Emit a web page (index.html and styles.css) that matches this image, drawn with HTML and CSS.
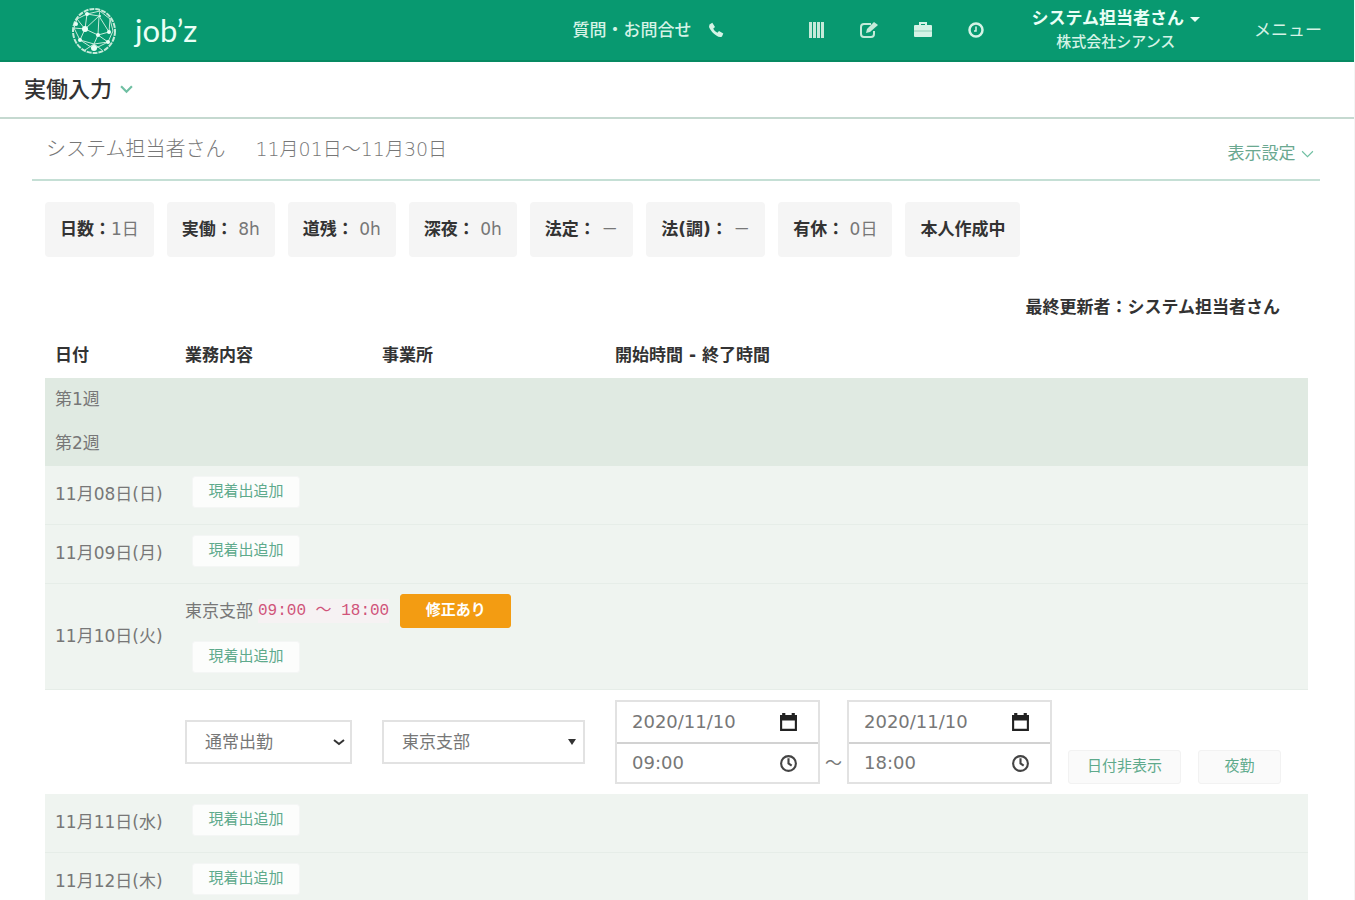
FILE: index.html
```html
<!DOCTYPE html>
<html lang="ja">
<head>
  <meta charset="UTF-8">
  <meta name="viewport" content="width=device-width, initial-scale=1.0">
  <title>実働入力 | job'z</title>
  <link rel="stylesheet" href="styles.css">
</head>
<body>
<header class="navbar">
  <a href="#" class="brand">
    <svg class="brand-mark" viewBox="0 0 46 48" fill="none" stroke="#c5ead9" stroke-width="1">
      <ellipse cx="23" cy="25" rx="21" ry="22" stroke-width="2" stroke-dasharray="5 1"/>
      <path d="M16 8L29 5L39 13L42 25L37 36L23 43L9 34L3 22L6 13L16 8L14 23L28 10L27 29L14 23L3 22M14 23L9 34L23 38L27 29L38 26L28 10L29 5M27 29L37 36L23 38L23 43M38 26L39 13M6 13L14 23M16 8L28 10M23 38L14 44M23 38L31 44"/>
      <g fill="#e9fff6" stroke="none">
        <circle cx="14" cy="23" r="3"/><circle cx="16" cy="8" r="2"/><circle cx="27" cy="29" r="2"/><circle cx="38" cy="26" r="2"/>
        <circle cx="37" cy="36" r="2"/><circle cx="9" cy="34" r="2"/><circle cx="23" cy="42" r="3"/><circle cx="5" cy="18" r="2"/><circle cx="29" cy="10" r="1"/>
      </g>
    </svg>
    <span class="brand-name">job’z</span>
  </a>
  <a href="#" class="contact">質問・お問合せ
    <svg class="icon" viewBox="0 0 16 16"><path d="M1.5 2.5L4.3.8L7 5L5.2 6.7Q6.5 9.3 9.4 10.8L11 9L15.3 11.6L14 14.4Q12 16 8.300 13.500Q3 10 1 5Z" fill="#d5f3e6"/></svg>
  </a>
  <nav class="tools">
    <a href="#" aria-label="一覧"><svg class="icon" viewBox="0 0 16 16" fill="#c5ead9"><path d="M1 0h3v16H1zM5 0h3v16H5zM9 0h3v16H9zM13 0h3v16h-3z"/></svg></a>
    <a href="#" aria-label="編集"><svg class="icon icon-wide" viewBox="0 0 18 16" fill="none" stroke="#c5ead9" stroke-width="2"><path d="M11 2H4Q1 2 1 5v7q0 3 3 3h7q3 0 3-3V9"/><path d="M6 11l1-4L14 0l4 3l-8 7z" fill="#c5ead9" stroke="none"/></svg></a>
    <a href="#" aria-label="業務"><svg class="icon icon-wide" viewBox="0 0 18 16"><path d="M6 3V1h6v2" fill="none" stroke="#d5f3e6" stroke-width="2"/><path d="M1 3h16q1 0 1 1v5H0V4q0-1 1-1zM0 9h18v5q0 1-1 1H1q-1 0-1-1z" fill="#d5f3e6"/><path d="M0 9h18" stroke="#8fd0b8"/></svg></a>
    <a href="#" aria-label="勤怠"><svg class="icon" viewBox="0 0 16 16" fill="none" stroke="#d5f3e6"><circle cx="8" cy="8" r="6.500" stroke-width="2.500"/><path d="M8 4.500V9H6" stroke-width="1.500"/></svg></a>
  </nav>
  <a href="#" class="user">
    <span class="user-name">システム担当者さん <i class="caret"></i></span>
    <span class="user-company">株式会社シアンス</span>
  </a>
  <a href="#" class="menu">メニュー</a>
</header>

<div class="page-title">
  <h1>実働入力</h1>
  <svg class="chevron" viewBox="0 0 12 8"><path d="M1 1l5 5l5-5"/></svg>
</div>

<main class="content">
  <div class="sub-header">
    <h2>システム担当者さん<span class="period">11月01日～11月30日</span></h2>
    <a href="#" class="display-setting">表示設定 <svg class="chevron chevron-thin" viewBox="0 0 12 8"><path d="M1 1l5 5l5-5"/></svg></a>
  </div>

  <div class="body">
    <ul class="summary">
      <li><b>日数：</b>1日</li>
      <li><b>実働：</b> 8h</li>
      <li><b>道残：</b> 0h</li>
      <li><b>深夜：</b> 0h</li>
      <li><b>法定：</b> －</li>
      <li><b>法(調)：</b> －</li>
      <li><b>有休：</b> 0日</li>
      <li><b>本人作成中</b></li>
    </ul>

    <p class="updated">最終更新者：システム担当者さん</p>

    <table class="work">
      <colgroup><col class="col-date"><col class="col-work"><col class="col-office"><col></colgroup>
      <thead>
        <tr><th>日付</th><th>業務内容</th><th>事業所</th><th>開始時間 - 終了時間</th></tr>
      </thead>
      <tbody>
        <tr class="week"><td colspan="4">第1週</td></tr>
        <tr class="week"><td colspan="4">第2週</td></tr>
        <tr class="day"><td>11月08日(日)</td><td colspan="3"><button class="btn btn-add">現着出追加</button></td></tr>
        <tr class="day"><td>11月09日(月)</td><td colspan="3"><button class="btn btn-add">現着出追加</button></td></tr>
        <tr class="day">
          <td>11月10日(火)</td>
          <td colspan="3">
            <div class="entry"><span>東京支部</span><code>09:00 ～ 18:00</code><button class="btn btn-fix">修正あり</button></div>
            <button class="btn btn-add">現着出追加</button>
          </td>
        </tr>
        <tr class="edit">
          <td></td>
          <td>
            <div class="select">
              <select aria-label="業務内容"><option>通常出勤</option></select>
              <svg class="arrow" viewBox="0 0 12 12"><path d="M1 4l5 4l5-4" fill="none" stroke="#333" stroke-width="2"/></svg>
            </div>
          </td>
          <td>
            <div class="select">
              <select aria-label="事業所"><option>東京支部</option></select>
              <svg class="arrow" viewBox="0 0 12 12"><path d="M2 3h8l-4 6z" fill="#333"/></svg>
            </div>
          </td>
          <td>
            <div class="times">
              <div class="datetime">
                <div class="field">
                  <input type="text" value="2020/11/10" aria-label="開始日">
                  <svg viewBox="0 0 18 18"><path d="M2 3h14v13H2z" fill="none" stroke="#222" stroke-width="2"/><path d="M1 2h16v5H1zM3 0h3v3H3zM12 0h3v3h-3z" fill="#222"/></svg>
                </div>
                <div class="field">
                  <input type="text" value="09:00" aria-label="開始時間">
                  <svg viewBox="0 0 18 18" fill="none" stroke="#444" stroke-width="2"><circle cx="9" cy="9" r="7"/><path d="M9 4v5l3 2"/></svg>
                </div>
              </div>
              <span class="tilde">～</span>
              <div class="datetime">
                <div class="field">
                  <input type="text" value="2020/11/10" aria-label="終了日">
                  <svg viewBox="0 0 18 18"><path d="M2 3h14v13H2z" fill="none" stroke="#222" stroke-width="2"/><path d="M1 2h16v5H1zM3 0h3v3H3zM12 0h3v3h-3z" fill="#222"/></svg>
                </div>
                <div class="field">
                  <input type="text" value="18:00" aria-label="終了時間">
                  <svg viewBox="0 0 18 18" fill="none" stroke="#444" stroke-width="2"><circle cx="9" cy="9" r="7"/><path d="M9 4v5l3 2"/></svg>
                </div>
              </div>
              <button class="btn btn-date">日付非表示</button>
              <button class="btn btn-night">夜勤</button>
            </div>
          </td>
        </tr>
        <tr class="day"><td>11月11日(水)</td><td colspan="3"><button class="btn btn-add">現着出追加</button></td></tr>
        <tr class="day"><td>11月12日(木)</td><td colspan="3"><button class="btn btn-add">現着出追加</button></td></tr>
      </tbody>
    </table>
  </div>
</main>
</body>
</html>
```

FILE: styles.css
```css
*{box-sizing:border-box}
html{overflow-x:hidden;scrollbar-width:none}
body{
  margin:0;
  border-right:1px solid #f4f4f4;
  font-family:"DejaVu Sans","Noto Sans CJK JP",sans-serif;
  font-size:17px;
  line-height:24px;
  color:#777;
  background:#fff;
}
a{color:inherit;text-decoration:none}
h1,h2,p,ul{margin:0;padding:0}

/* ヘッダー */
.navbar{
  display:flex;
  align-items:center;
  height:62px;
  padding:0 32px 0 71px;
  background:#089970;
  border-bottom:2px solid #078a62;
  color:#d5f3e6;
}
.brand{display:flex;align-items:center;gap:18px;margin-right:auto}
.brand-mark{width:46px;height:48px}
.brand-name{font-family:Lato,sans-serif;font-size:31px;line-height:40px;color:#eafff6}
.contact{display:flex;align-items:center;gap:16px;font-weight:500}
.icon{display:block;width:16px;height:16px}
.icon-wide{width:18px}
.tools{display:flex;gap:36px;margin:0 48px 0 84px}
.user{display:flex;flex-direction:column;align-items:center;margin-right:54px}
.user-name{font-weight:bold;color:#eafff6}
.user-company{font-size:15px;font-weight:500}
.caret{display:inline-block;border:5px solid transparent;border-top-color:#eafff6;border-bottom:0;vertical-align:middle}

.page-title{display:flex;align-items:center;gap:8px;height:57px;padding:0 24px;border-bottom:2px solid #c5d9d0}
.page-title h1{font-size:22px;line-height:32px;font-weight:500;color:#333}
.chevron{width:13px;height:9px;fill:none;stroke:#6fbfa2;stroke-width:2}
.chevron-thin{stroke-width:1}

.content{padding:0 34px 0 32px}
.sub-header{display:flex;justify-content:space-between;align-items:center;height:62px;padding:0 6px 0 14px;border-bottom:2px solid #c5dfd5}
.sub-header h2{font-size:20px;line-height:28px;font-weight:300}
.period{margin-left:30px;font-size:19px}
.display-setting{padding-top:8px;color:#6aa890}
.body{padding:21px 12px 0 13px}

/* 集計 */
.summary{display:flex;gap:13px;list-style:none}
.summary li{height:55px;padding:15px;border-radius:4px;background:#f5f5f5;white-space:nowrap}
.summary b{font-weight:bold;color:#333}
.updated{margin-top:38px;padding-right:28px;text-align:right;font-weight:bold;color:#333}

/* 実働テーブル */
.work{width:100%;margin-top:12px;border-collapse:collapse;table-layout:fixed}
.col-date{width:130px}
.col-work{width:197px}
.col-office{width:233px}
.work th{height:47px;padding:0 10px;text-align:left;font-weight:bold;color:#333}
.work td{padding:10px}
.work .week td{padding:9px 10px 11px}
.week{background:#e0eae2}
.day{background:#eff4f0;border-bottom:1px solid #e6ede8}
.day td{padding-bottom:16px}
.work .day td:first-child{padding-bottom:12px}
.entry{display:flex;align-items:center;gap:5px;margin-bottom:13px}
.entry code{font-family:"Liberation Mono","Noto Sans CJK JP",monospace;font-size:16px;color:#d0547a;background:#f6f2f3}

.btn{
  display:block;
  height:32px;
  padding:0 0 2px;
  border:1px solid #f4f6f5;
  border-radius:3px;
  background:#fcfdfc;
  font-family:inherit;
  font-size:15px;
  line-height:24px;
  color:#5eaa8c;
}
.btn-add{width:108px;margin-left:7px}
.btn-fix{width:111px;height:34px;margin-left:6px;border-color:#f39c12;background:#f39c12;color:#fff;font-weight:bold}
.btn-date,.btn-night{height:34px;background:#fafafa;border-color:#f2f2f2}
.btn-date{width:113px;margin-left:16px}
.btn-night{width:83px;margin-left:17px}

/* 入力行 */
.select{position:relative;height:44px;margin-right:20px}
.select select{
  width:100%;
  height:100%;
  padding:0 18px;
  border:2px solid #e2e2e2;
  border-radius:0;
  appearance:none;
  background:#fff;
  font:inherit;
  color:inherit;
}
.arrow{position:absolute;right:7px;top:16px;width:12px;height:12px;pointer-events:none}
.work .edit td{padding:10px 0 10px 10px}
.times{display:flex;align-items:flex-end}
.datetime{width:205px;border:2px solid #e2e2e2}
.field{display:flex;align-items:center;justify-content:space-between;padding:0 20px 0 15px;height:40px}
.field + .field{border-top:2px solid #d2d2d2}
.field input{width:130px;padding:0;border:0;background:none;font:inherit;font-size:18px;color:inherit}
.field svg{width:19px;height:19px}
.tilde{width:27px;padding-bottom:9px;text-align:center}
```
